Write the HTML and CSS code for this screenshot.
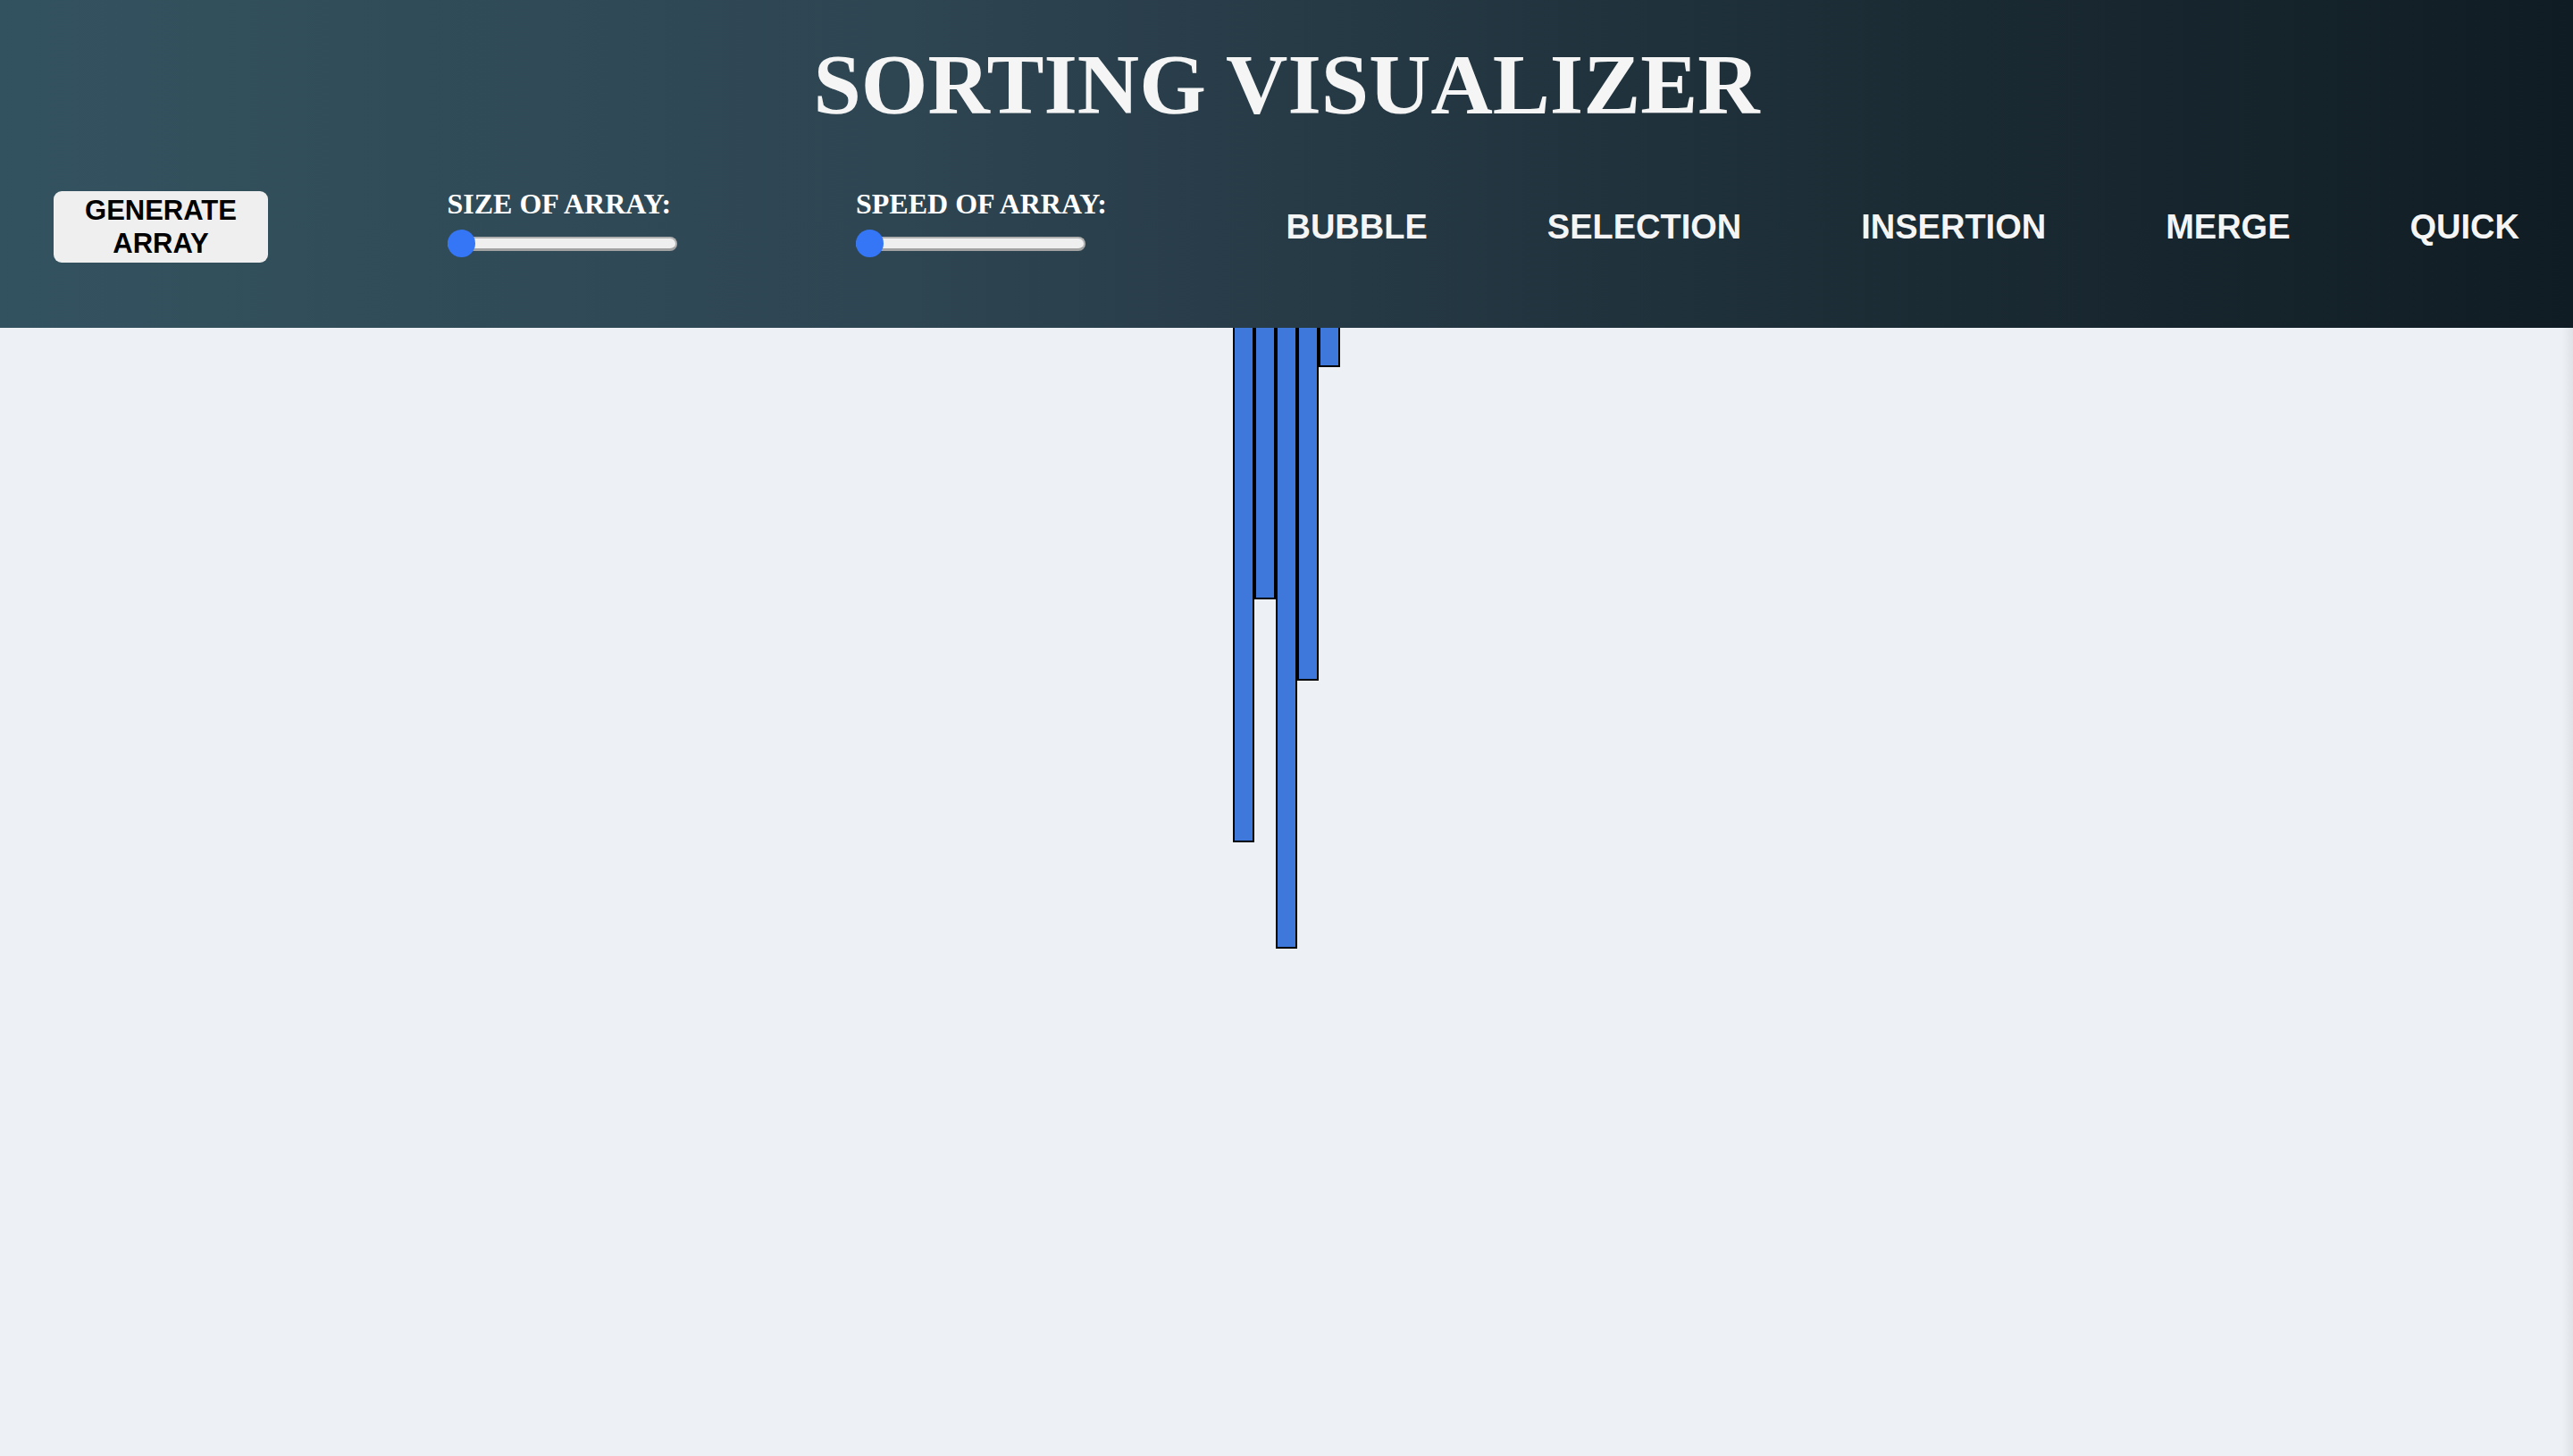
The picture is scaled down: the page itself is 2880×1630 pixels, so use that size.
FILE: index.html
```html
<!DOCTYPE html>
<html lang="en">
<head>
<meta charset="utf-8">
<title>Sorting Visualizer</title>
<link rel="stylesheet" href="styles.css">
</head>
<body>
<header class="header">
  <h1 class="title">SORTING VISUALIZER</h1>
  <nav class="controls">
    <button class="generate-btn">GENERATE ARRAY</button>
    <div class="slider-group">
      <label class="slider-label" for="size">SIZE OF ARRAY:</label>
      <input class="slider" id="size" type="range" min="5" max="100" value="5">
    </div>
    <div class="slider-group">
      <label class="slider-label" for="speed">SPEED OF ARRAY:</label>
      <input class="slider" id="speed" type="range" min="1" max="100" value="1">
    </div>
    <div class="algos">
      <button class="algo-btn">BUBBLE</button>
      <button class="algo-btn">SELECTION</button>
      <button class="algo-btn">INSERTION</button>
      <button class="algo-btn">MERGE</button>
      <button class="algo-btn">QUICK</button>
    </div>
  </nav>
</header>
<main class="bars">
  <div class="bar" style="height:576px"></div>
  <div class="bar" style="height:304px"></div>
  <div class="bar" style="height:695px"></div>
  <div class="bar" style="height:395px"></div>
  <div class="bar" style="height:44px"></div>
</main>
</body>
</html>
```
FILE: styles.css
```css
* {
  box-sizing: border-box;
}

html, body {
  margin: 0;
  padding: 0;
  height: 100%;
}

body {
  background: #edf1f6;
  display: flex;
  flex-direction: column;
  font-family: "Liberation Sans", Arial, sans-serif;
}

.header {
  height: 367px;
  padding-top: 42px;
  background: linear-gradient(to right, #33525f 0%, #2e4552 35%, #1f313b 65%, #101c23 100%);
  flex: none;
}

.title {
  margin: 0;
  text-align: center;
  font-family: "Liberation Serif", "Times New Roman", serif;
  font-weight: bold;
  font-size: 96px;
  line-height: 105px;
  color: #f5f5f5;
}

.controls {
  margin-top: 67px;
  height: 80px;
  padding: 0 60px;
  display: flex;
  align-items: center;
  justify-content: space-between;
}

.generate-btn {
  width: 240px;
  height: 80px;
  padding: 3px 10px;
  border: none;
  border-radius: 9px;
  background: #efefef;
  color: #000;
  font-family: "Liberation Sans", Arial, sans-serif;
  font-weight: bold;
  font-size: 31px;
  line-height: 37px;
  text-align: center;
}

.slider-group {
  display: flex;
  flex-direction: column;
  align-items: flex-start;
  padding-bottom: 7px;
}

.slider-label {
  display: block;
  margin-bottom: 13px;
  font-family: "Liberation Serif", "Times New Roman", serif;
  font-weight: bold;
  font-size: 32px;
  line-height: 31px;
  color: #ffffff;
  white-space: nowrap;
}

.slider {
  -webkit-appearance: none;
  appearance: none;
  width: 257px;
  height: 31px;
  margin: 0;
  background: transparent;
  display: block;
}

.slider::-webkit-slider-runnable-track {
  height: 16px;
  background: #efefef;
  border: 2px solid #b0b0b0;
  border-bottom: 3px solid #a2a2a2;
  border-radius: 8px;
}

.slider::-webkit-slider-thumb {
  -webkit-appearance: none;
  appearance: none;
  width: 31px;
  height: 31px;
  margin-top: -10px;
  margin-left: -2px;
  border: none;
  border-radius: 50%;
  background: #3476f5;
}

.algos {
  display: flex;
  align-items: center;
  gap: 134px;
}

.algo-btn {
  padding: 0;
  border: none;
  background: transparent;
  color: #f5f5f5;
  font-family: "Liberation Sans", Arial, sans-serif;
  font-weight: bold;
  font-size: 38px;
  line-height: 44px;
}

.bars {
  flex: 1;
  display: flex;
  justify-content: center;
  align-items: flex-start;
  background: linear-gradient(to right, #edf1f6 calc(100% - 12px), #dfe2e7 100%);
}

.bar {
  width: 24px;
  background: #3e78db;
  border: 2px solid #000;
  border-top: none;
}
```
